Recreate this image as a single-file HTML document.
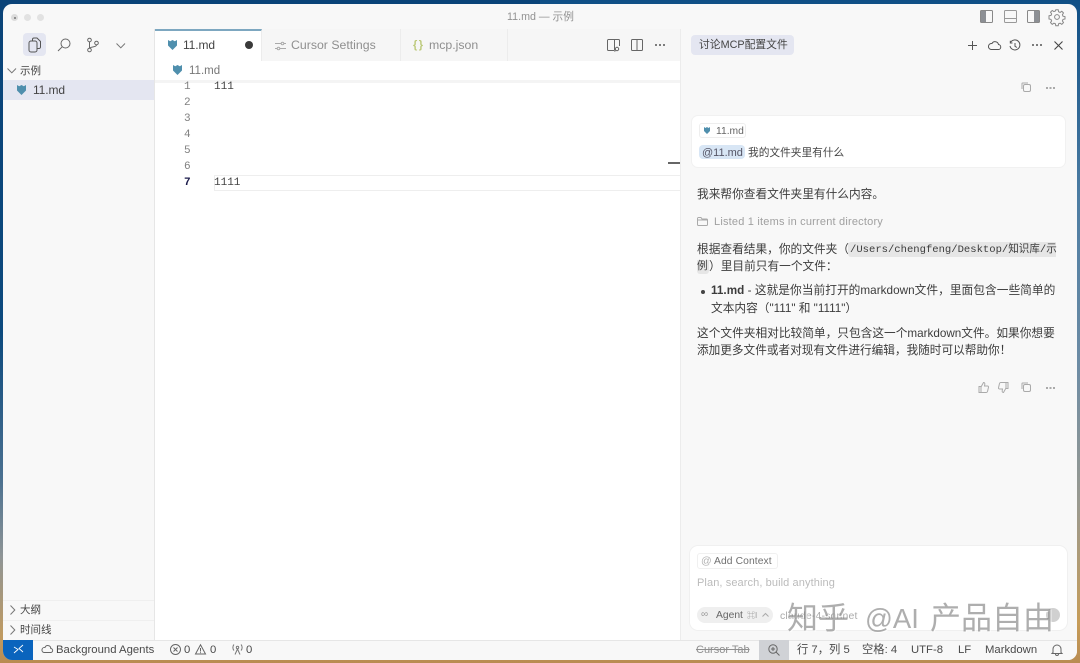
<!DOCTYPE html>
<html><head><meta charset="utf-8">
<style>
html,body{margin:0;padding:0}
body{width:1080px;height:663px;overflow:hidden;position:relative;font-family:"Liberation Sans","Noto Sans CJK SC",sans-serif;background:#0c4c84}
.bg{position:absolute;top:0;height:663px}
#w{position:absolute;left:3px;top:4px;width:1074px;height:656px;background:#f8f8f8;border-radius:9px;overflow:hidden}
.a{position:absolute}
.t{position:absolute;white-space:nowrap;line-height:16px;color:#3c3c3c;font-size:12px}
.m{font-family:"Liberation Mono","Noto Sans CJK SC",monospace}
svg{position:absolute;overflow:visible;fill:none;stroke:#5f5f5f;stroke-width:1}
</style></head><body>
<div class="bg" style="left:0;width:540px;background:linear-gradient(180deg,#0a4378 0%,#0c4a7e 50%,#4a7090 72%,#8f9596 84%,#c09a60 96%,#b98c52 100%)"></div>
<div class="bg" style="left:540px;width:540px;background:linear-gradient(180deg,#0f4f86 0%,#4d7da3 30%,#6d8ca5 55%,#9a9a90 76%,#c69c58 94%,#b98c52 100%)"></div>
<div id="w" style="position:absolute">
<div style="position:absolute;left:-3px;top:-4px;width:1080px;height:663px;filter:blur(.3px)">
 <!-- title bar -->
 <div class="a" style="left:11px;top:14px;width:7px;height:7px;border-radius:50%;background:#dcdcdc"></div>
 <div class="a" style="left:14px;top:17px;width:2px;height:2px;border-radius:50%;background:#777"></div>
 <div class="a" style="left:24px;top:14px;width:7px;height:7px;border-radius:50%;background:#e2e2e2"></div>
 <div class="a" style="left:37px;top:14px;width:7px;height:7px;border-radius:50%;background:#e2e2e2"></div>
 <div class="t" style="left:507px;top:9px;font-size:10.700px;color:#929292">11.md — 示例</div>
 <svg style="left:980px;top:10px" width="14" height="14"><rect x=".5" y=".5" width="12" height="12" rx="1" stroke="#888"/><rect x="1" y="1" width="5" height="11" fill="#8c8f94" stroke="none"/></svg>
 <svg style="left:1004px;top:10px" width="14" height="14"><rect x=".5" y=".5" width="12" height="12" rx="1" stroke="#999"/><path d="M1 8.500h12" stroke="#999"/></svg>
 <svg style="left:1027px;top:10px" width="14" height="14"><rect x=".5" y=".5" width="12" height="12" rx="1" stroke="#888"/><rect x="7" y="1" width="5" height="11" fill="#8c8f94" stroke="none"/></svg>
 <svg style="left:1049px;top:9px" width="16" height="16" viewBox="0 0 16 16"><circle cx="8" cy="8" r="2.400" stroke="#888"/><path stroke="#888" d="M6.800 .8h2.400l.4 2 1.500.6 1.700-1.100 1.700 1.700-1.100 1.700.6 1.500 2 .4v2.400l-2 .4-.6 1.500 1.100 1.700-1.700 1.700-1.700-1.100-1.500.6-.4 2H6.800l-.4-2-1.500-.6-1.700 1.100-1.700-1.700 1.100-1.700-.6-1.500-2-.4V6.800l2-.4.6-1.500L1.500 3.200l1.700-1.700 1.700 1.100 1.500-.6z"/></svg>

 <!-- sidebar -->
 <div class="a" style="left:0;top:29px;width:155px;height:611px;background:#f8f8f8;border-right:1px solid #e6e6e6;box-sizing:border-box"></div>
 <div class="a" style="left:23px;top:33px;width:23px;height:23px;background:#e4e6f1;border-radius:4px"></div>
 <svg style="left:28px;top:37px" width="14" height="16"><rect x="1" y="4" width="8" height="11" rx="2" stroke="#555"/><path d="M4.500 4V2.500a1.500 1.500 0 0 1 1.500-1.500h3l3.500 3.500V10a1.500 1.500 0 0 1-1.500 1.500H9" stroke="#555"/></svg>
 <svg style="left:57px;top:38px" width="14" height="14"><circle cx="8.500" cy="5.500" r="4.500" stroke="#666"/><path d="M5.200 8.800L1 13" stroke="#666"/></svg>
 <svg style="left:87px;top:37px" width="14" height="16"><circle cx="2.500" cy="3" r="1.800" stroke="#666"/><circle cx="2.500" cy="13" r="1.800" stroke="#666"/><circle cx="9.500" cy="6" r="1.800" stroke="#666"/><path d="M2.500 5v6M9.500 8c0 2.500-7 1.500-7 3.500" stroke="#666"/></svg>
 <svg style="left:116px;top:43px" width="10" height="6"><path d="M.5.500L4.800 4.800 9 .5" stroke="#777"/></svg>
 <svg style="left:7px;top:68px" width="10" height="6"><path d="M.5.500L4.800 4.800 9 .5" stroke="#777"/></svg>
 <div class="t" style="left:20px;top:63px;font-size:10.500px;color:#444">示例</div>
 <div class="a" style="left:3px;top:80px;width:151px;height:20px;background:#e4e6f1"></div>
 <svg style="left:17px;top:85px;stroke:none" width="9" height="10"><path fill="#4f8fad" d="M0 0l2.200 1.300L4.500 0l2.300 1.300L9 0v5.500L4.500 10 0 5.500z"/></svg>
 <div class="t" style="left:33px;top:82px;font-size:12px;color:#444;letter-spacing:-.1px">11.md</div>
 <div class="a" style="left:3px;top:600px;width:151px;height:1px;background:#efefef"></div>
 <div class="a" style="left:3px;top:620px;width:151px;height:1px;background:#efefef"></div>
 <svg style="left:10px;top:605px" width="6" height="10"><path d="M.5.500L4.800 5 .5 9.500" stroke="#777"/></svg>
 <svg style="left:10px;top:625px" width="6" height="10"><path d="M.5.500L4.800 5 .5 9.500" stroke="#777"/></svg>
 <div class="t" style="left:20px;top:602px;font-size:10.500px;color:#444">大纲</div>
 <div class="t" style="left:20px;top:622px;font-size:10.500px;color:#444">时间线</div>

 <!-- tabs -->
 <div class="a" style="left:155px;top:29px;width:525px;height:32px;background:#f6f6f6"></div>
 <div class="a" style="left:155px;top:29px;width:107px;height:32px;background:#fff;border-top:2px solid #7da7c0;box-sizing:border-box;border-right:1px solid #ececec"></div>
 <svg style="left:168px;top:40px;stroke:none" width="9" height="10"><path fill="#4f8fad" d="M0 0l2.200 1.300L4.500 0l2.300 1.300L9 0v5.500L4.500 10 0 5.500z"/></svg>
 <div class="t" style="left:183px;top:37px;font-size:12px;color:#444;letter-spacing:-.1px">11.md</div>
 <div class="a" style="left:245px;top:41px;width:8px;height:8px;border-radius:50%;background:#3a3a3a"></div>
 <svg style="left:275px;top:41px" width="11" height="10"><path d="M0 2.500h6M9 2.500h2M0 7.500h2M5 7.500h6" stroke="#aaa"/><circle cx="7.500" cy="2.500" r="1.300" stroke="#aaa"/><circle cx="3.500" cy="7.500" r="1.300" stroke="#aaa"/></svg>
 <div class="t" style="left:291px;top:37px;font-size:12.300px;color:#8f8f8f">Cursor Settings</div>
 <div class="a" style="left:400px;top:29px;width:1px;height:32px;background:#ececec"></div>
 <div class="t" style="left:413px;top:37px;font-size:11px;font-weight:700;color:#bcc97a;letter-spacing:1.500px">{}</div>
 <div class="t" style="left:429px;top:37px;font-size:12.300px;color:#8f8f8f">mcp.json</div>
 <div class="a" style="left:507px;top:29px;width:1px;height:32px;background:#ececec"></div>
 <svg style="left:607px;top:39px" width="14" height="13"><path d="M7 11.500H1.500a1 1 0 0 1-1-1v-9a1 1 0 0 1 1-1h10a1 1 0 0 1 1 1V7M7.500.5v11" stroke="#666"/><circle cx="10" cy="10" r="1.700" stroke="#666"/><path d="M8.500 11.500L7.500 12.500" stroke="#666"/></svg>
 <svg style="left:631px;top:39px" width="13" height="13"><rect x=".5" y=".5" width="11" height="11" rx="1" stroke="#666"/><path d="M6 .5v11" stroke="#666"/></svg>
 <div class="a" style="left:655px;top:44px;width:2px;height:2px;background:#555;box-shadow:4px 0 #555,8px 0 #555;border-radius:50%"></div>

 <!-- editor -->
 <div class="a" style="left:155px;top:61px;width:525px;height:579px;background:#fff"></div>
 <div class="a" style="left:155px;top:80px;width:525px;height:3px;background:#f4f4f4"></div>
 <svg style="left:173px;top:65px;stroke:none" width="9" height="10"><path fill="#4f8fad" d="M0 0l2.200 1.300L4.500 0l2.300 1.300L9 0v5.500L4.500 10 0 5.500z"/></svg>
 <div class="t" style="left:189px;top:63px;font-size:11.500px;color:#777">11.md</div>
 <div class="t m" style="left:184px;top:79px;font-size:11px;color:#808080">1</div>
 <div class="t m" style="left:184px;top:95px;font-size:11px;color:#808080">2</div>
 <div class="t m" style="left:184px;top:111px;font-size:11px;color:#808080">3</div>
 <div class="t m" style="left:184px;top:127px;font-size:11px;color:#808080">4</div>
 <div class="t m" style="left:184px;top:143px;font-size:11px;color:#808080">5</div>
 <div class="t m" style="left:184px;top:159px;font-size:11px;color:#808080">6</div>
 <div class="t m" style="left:184px;top:175px;font-size:11px;color:#1a1a4a;font-weight:700">7</div>
 <div class="t m" style="left:214px;top:79px;font-size:11px;color:#444">111</div>
 <div class="a" style="left:214px;top:175px;width:466px;height:16px;border:1px solid #eee;border-right:0;box-sizing:border-box"></div>
 <div class="t m" style="left:214px;top:175px;font-size:11px;color:#444">1111</div>
 <div class="a" style="left:668px;top:162px;width:12px;height:1.500px;background:#666"></div>

 <!-- chat panel -->
 <div class="a" style="left:680px;top:29px;width:1px;height:611px;background:#ececec"></div>
 <div class="a" style="left:691px;top:35px;width:103px;height:20px;background:#e4e6f1;border-radius:4px"></div>
 <div class="t" style="left:699px;top:37px;font-size:10.800px;color:#444">讨论MCP配置文件</div>
 <svg style="left:968px;top:41px" width="9" height="9"><path d="M4.500 0v9M0 4.500h9" stroke="#555"/></svg>
 <svg style="left:988px;top:41px" width="13" height="9"><path d="M3 8.500h7a2.500 2.500 0 0 0 .5-5A3.500 3.500 0 0 0 4 2.500 3 3 0 0 0 3 8.500z" stroke="#555"/></svg>
 <svg style="left:1009px;top:40px" width="12" height="12"><path d="M1.500 2.500A5 5 0 1 1 1 6M1.300 .8v2.200h2.200M6 3v3.300l2 1.200" stroke="#555"/></svg>
 <div class="a" style="left:1032px;top:44px;width:2px;height:2px;background:#555;box-shadow:4px 0 #555,8px 0 #555;border-radius:50%"></div>
 <svg style="left:1054px;top:41px" width="9" height="9"><path d="M.5.500l8 8M8.500.500l-8 8" stroke="#444" stroke-width="1.100"/></svg>

 <svg style="left:1021px;top:82px" width="10" height="10"><rect x="2.500" y="2.500" width="7" height="7" rx="1.500" stroke="#aaa"/><path d="M1 7V1.500A.5.500 0 0 1 1.500 1H7" stroke="#aaa"/></svg>
 <div class="a" style="left:1046px;top:87px;width:1.500px;height:1.500px;background:#aaa;box-shadow:3.500px 0 #aaa,7px 0 #aaa"></div>

 <div class="a" style="left:692px;top:116px;width:373px;height:51px;background:#fff;border-radius:6px;box-shadow:0 0 0 1px #f1f1f1"></div>
 <div class="a" style="left:699px;top:123px;width:47px;height:15px;border:1px solid #eee;border-radius:3px;box-sizing:border-box"></div>
 <svg style="left:704px;top:127px;stroke:none" width="6" height="7"><path fill="#4f8fad" d="M0 0l1.500 1L3 0l1.500 1L6 0v4L3 7 0 4z"/></svg>
 <div class="t" style="left:716px;top:124px;font-size:10.300px;color:#666">11.md</div>
 <div class="a" style="left:699px;top:145px;width:46px;height:14px;background:#d8e6f5;border-radius:4px"></div>
 <div class="t" style="left:702px;top:145px;font-size:11px;color:#556">@11.md</div>
 <div class="t" style="left:748px;top:145px;font-size:10.700px;color:#444">我的文件夹里有什么</div>

 <div class="t" style="left:697px;top:187px;font-size:11.700px;color:#3c3c3c">我来帮你查看文件夹里有什么内容。</div>
 <svg style="left:697px;top:217px" width="11" height="9"><path d="M.5 7.500v-6a1 1 0 0 1 1-1h2.500l1 1.500h4.500a1 1 0 0 1 1 1v4.500a1 1 0 0 1-1 1h-8a1 1 0 0 1-1-1zM.5 3h10" stroke="#aaa"/></svg>
 <div class="t" style="left:714px;top:214px;font-size:11px;color:#a0a0a0;letter-spacing:.2px">Listed 1 items in current directory</div>

 <div class="t" style="left:697px;top:242px;font-size:11.700px;color:#3c3c3c">根据查看结果，你的文件夹（</div>
 <div class="a" style="left:848px;top:242px;width:208px;height:15px;background:#e6e6e6;border-radius:3px 0 0 3px"></div>
 <div class="a" style="left:697px;top:260px;width:12px;height:14px;background:#e6e6e6;border-radius:0 0 3px 3px"></div>
 <div class="t m" style="left:850px;top:242px;font-size:10.550px;color:#3c3c3c">/Users/chengfeng/Desktop/知识库/示</div>
 <div class="t m" style="left:697px;top:259px;font-size:10.550px;color:#3c3c3c">例</div>
 <div class="t" style="left:709px;top:259px;font-size:11.700px;color:#3c3c3c">）里目前只有一个文件：</div>
 <div class="a" style="left:701px;top:290px;width:4px;height:4px;border-radius:50%;background:#444"></div>
 <div class="t" style="left:711px;top:283px;font-size:11.700px;letter-spacing:.04px;color:#3c3c3c"><b>11.md</b> - 这就是你当前打开的markdown文件，里面包含一些简单的</div>
 <div class="t" style="left:711px;top:301px;font-size:11.700px;color:#3c3c3c">文本内容（"111" 和 "1111"）</div>
 <div class="t" style="left:697px;top:326px;font-size:11.700px;color:#3c3c3c">这个文件夹相对比较简单，只包含这一个markdown文件。如果你想要</div>
 <div class="t" style="left:697px;top:343px;font-size:11.650px;color:#3c3c3c">添加更多文件或者对现有文件进行编辑，我随时可以帮助你！</div>

 <svg style="left:978px;top:382px" width="11" height="11"><path d="M3 4.500v6H1v-6zM3 5l2.500-4.500c1 0 1.500.8 1.300 1.800L6.500 4h3c.7 0 1.200.6 1 1.300l-1 4.200c-.2.600-.6 1-1.200 1H3" stroke="#aaa"/></svg>
 <svg style="left:998px;top:382px" width="11" height="11"><path d="M8 6.500v-6h2v6zM8 6l-2.500 4.500c-1 0-1.500-.8-1.300-1.800L4.500 7h-3c-.7 0-1.200-.6-1-1.300l1-4.200C1.700.9 2.100.5 2.700.5H8" stroke="#aaa"/></svg>
 <svg style="left:1021px;top:382px" width="10" height="10"><rect x="2.500" y="2.500" width="7" height="7" rx="1.500" stroke="#aaa"/><path d="M1 7V1.500A.5.500 0 0 1 1.500 1H7" stroke="#aaa"/></svg>
 <div class="a" style="left:1046px;top:387px;width:1.500px;height:1.500px;background:#aaa;box-shadow:3.500px 0 #aaa,7px 0 #aaa"></div>

 <!-- input box -->
 <div class="a" style="left:690px;top:546px;width:377px;height:84px;background:#fff;border-radius:8px;box-shadow:0 0 0 1px #f0f0f0"></div>
 <div class="a" style="left:697px;top:553px;width:81px;height:16px;border:1px solid #f0f0f0;border-radius:3px;box-sizing:border-box"></div>
 <div class="t" style="left:701px;top:553px;font-size:10.500px;color:#b0b0b0">@</div>
 <div class="t" style="left:714px;top:554px;font-size:10.300px;color:#707070;letter-spacing:.1px">Add Context</div>
 <div class="t" style="left:697px;top:575px;font-size:11px;color:#bbb;letter-spacing:.1px">Plan, search, build anything</div>
 <div class="a" style="left:697px;top:607px;width:76px;height:16px;border-radius:8px;background:#efefef"></div>
 <div class="t" style="left:701px;top:607px;font-size:10px;color:#999">∞</div>
 <div class="t" style="left:716px;top:608px;font-size:10.300px;font-weight:500;color:#666">Agent</div>
 <div class="t" style="left:747px;top:608px;font-size:8px;color:#999">⌘I</div>
 <svg style="left:762px;top:613px" width="7" height="4"><path d="M.5 3.500L3.500.5l3 3" stroke="#aaa"/></svg>
 <div class="t" style="left:780px;top:608px;font-size:10.500px;color:#aaa;letter-spacing:.15px">claude-4-sonnet</div>
 <div class="a" style="left:1046px;top:608px;width:14px;height:14px;border-radius:50%;background:#d0d0d0"></div>
 <div class="t" style="left:787px;top:603px;font-size:31px;line-height:31px;color:rgba(120,120,120,.6);text-shadow:1px 1px 0 rgba(255,255,255,.75)">知乎</div>
 <div class="t" style="left:865px;top:603px;font-size:27.500px;line-height:31px;color:rgba(120,120,120,.6);text-shadow:1px 1px 0 rgba(255,255,255,.75)">@AI</div>
 <div class="t" style="left:930px;top:603px;font-size:31px;line-height:31px;color:rgba(120,120,120,.6);text-shadow:1px 1px 0 rgba(255,255,255,.75)">产品自由</div>

 <!-- status bar -->
 <div class="a" style="left:0;top:640px;width:1080px;height:20px;background:#f8f8f8;border-top:1px solid #e6e6e6;box-sizing:border-box"></div>
 <div class="a" style="left:3px;top:640px;width:30px;height:20px;background:#0a64bd"></div>
 <svg style="left:13px;top:644px" width="11" height="11"><path d="M1 9l4-3.500L1 3M10 1L6 4.500 10 8" stroke="#fff" stroke-width=".9"/></svg>
 <svg style="left:41px;top:645px" width="12" height="8"><path d="M3 7.500h6.500a2 2 0 0 0 .3-4A3 3 0 0 0 4 2.500 2.500 2.500 0 0 0 3 7.500z" stroke="#666"/></svg>
 <div class="t" style="left:56px;top:642px;font-size:11.300px;letter-spacing:.02px;color:#4a4a4a">Background Agents</div>
 <svg style="left:170px;top:644px" width="11" height="11"><circle cx="5.500" cy="5.500" r="5" stroke="#666"/><path d="M3.500 3.500l4 4M7.500 3.500l-4 4" stroke="#666"/></svg>
 <div class="t" style="left:184px;top:642px;font-size:11.300px;color:#4a4a4a">0</div>
 <svg style="left:195px;top:644px" width="11" height="11"><path d="M5.500 .8L10.500 10H.5zM5.500 4v3.500M5.500 8.300v.8" stroke="#666"/></svg>
 <div class="t" style="left:210px;top:642px;font-size:11.300px;color:#4a4a4a">0</div>
 <svg style="left:232px;top:644px" width="11" height="11"><circle cx="5.500" cy="3.500" r="1.200" stroke="#777"/><path d="M5.500 5L3 10.500M5.500 5L8 10.500M2 .5C.5 2 .5 5 2 6.500M9 .5c1.500 1.500 1.500 4.500 0 6" stroke="#777"/></svg>
 <div class="t" style="left:246px;top:642px;font-size:11.300px;color:#4a4a4a">0</div>
 <div class="t" style="left:696px;top:642px;font-size:11px;color:#909090;text-decoration:line-through">Cursor Tab</div>
 <div class="a" style="left:759px;top:640px;width:30px;height:20px;background:#d0d2d6"></div>
 <svg style="left:768px;top:644px" width="12" height="12"><circle cx="5" cy="5" r="4.200" stroke="#666"/><path d="M8 8l3.500 3.500M3 5h4M5 3v4" stroke="#666"/></svg>
 <div class="t" style="left:797px;top:642px;font-size:11.300px;color:#4a4a4a">行 7，列 5</div>
 <div class="t" style="left:862px;top:642px;font-size:11.300px;color:#4a4a4a">空格: 4</div>
 <div class="t" style="left:911px;top:642px;font-size:11.300px;color:#4a4a4a">UTF-8</div>
 <div class="t" style="left:958px;top:642px;font-size:11.300px;color:#4a4a4a">LF</div>
 <div class="t" style="left:985px;top:642px;font-size:11.300px;color:#4a4a4a">Markdown</div>
 <svg style="left:1052px;top:644px" width="10" height="12"><path d="M1 8.500V5a4 4 0 0 1 8 0v3.500l1 1H0zM3.500 10c0 2 3 2 3 0" stroke="#666"/></svg>
</div>
</div>
</body></html>
